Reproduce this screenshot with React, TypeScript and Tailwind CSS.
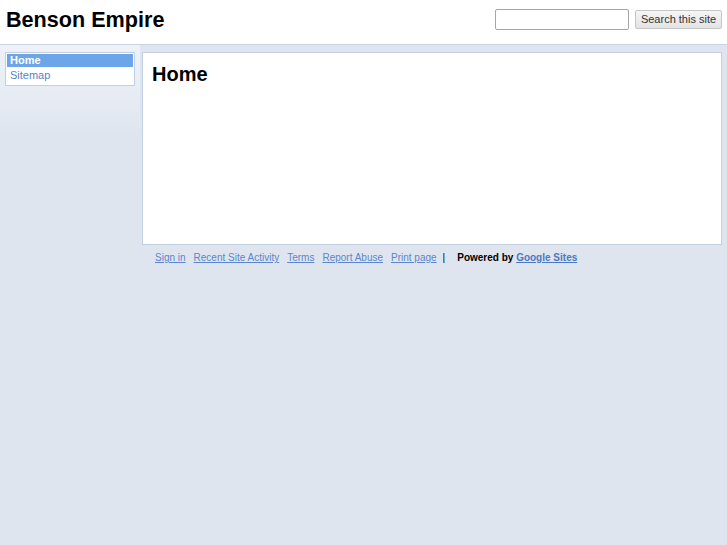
export default function App() {
  const links = ['Sign in', 'Recent Site Activity', 'Terms', 'Report Abuse', 'Print page'];

  return (
    <div className="min-h-[545px] bg-[#dfe5ef] font-['Liberation_Sans',Arial,sans-serif] text-black">
      {/* header */}
      <header className="h-[45px] bg-white flex items-start justify-between border-b border-[#c9d3e2]">
        <h1 className="ml-[6px] mt-[7px] text-[21.6px] font-bold leading-[26px]">Benson Empire</h1>
        <div className="flex items-start mt-[9px] mr-[5px] gap-[6px]">
          <input className="w-[134px] h-[21px] bg-white border border-[#a5a5a5] rounded-[2px] outline-none" />
          <button className="mt-[1px] h-[19px] w-[87px] text-[11px] leading-[17px] text-[#333] bg-gradient-to-b from-[#f6f6f6] to-[#e3e3e3] border border-[#c6c6c6] rounded-[2px]">
            Search this site
          </button>
        </div>
      </header>

      <div className="flex items-start bg-gradient-to-b from-[#eef2f8] via-[#e8edf5] to-[#dfe5ef] bg-no-repeat bg-[length:140px_90px]">
        {/* sidebar */}
        <aside className="w-[142px] pl-[5px] pr-[7px] pt-[7px] pb-[40px]">
          <nav className="border border-[#c3cfe0] bg-white p-[1px] text-[11px] leading-[14px]">
            <div className="bg-[#6ca6e8] text-white font-bold pl-[3px] h-[13px] leading-[13px]">Home</div>
            <div className="text-[#5582c8] pl-[3px] h-[17px] leading-[17px]">Sitemap</div>
          </nav>
        </aside>

        {/* main */}
        <div className="flex flex-col w-[580px]">
          <main className="mt-[7px] h-[193px] bg-white border border-[#c3cfe0] px-[9px] pt-[9px]">
            <h2 className="text-[20px] font-bold leading-[24px]">Home</h2>
          </main>
          <footer className="flex items-center pl-[13px] pt-[6px] text-[10px] leading-[14px]">
            {links.map((l) => (
              <a key={l} href="#" className="text-[#5b85cc] underline mr-[8px]">
                {l}
              </a>
            ))}
            <span className="text-black -ml-[2px] mr-[12px]">|</span>
            <span className="font-bold">
              Powered by <a href="#" className="text-[#4a78c2] underline">Google Sites</a>
            </span>
          </footer>
        </div>
      </div>
    </div>
  );
}
